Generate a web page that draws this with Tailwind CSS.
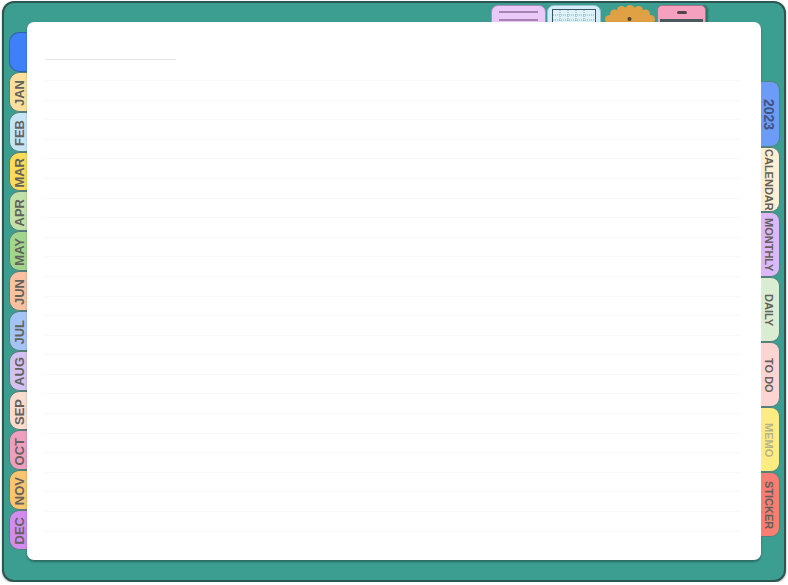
<!DOCTYPE html>
<html lang="en">
<head>
  <meta charset="UTF-8" />
  <title>Planner</title>
  <meta name="viewport" content="width=device-width, initial-scale=1.0" />
  <script src="https://cdn.jsdelivr.net/npm/@tailwindcss/browser@4"></script>
</head>
<body class="bg-white font-['Liberation_Sans',sans-serif] overflow-hidden">
  <!-- cover -->
  <div class="ml-[2px] mt-px w-[784px] h-[581px] rounded-[12px] border-2 border-[#2b5652] bg-[#3b9e90] flex pl-[5px] pt-[2px] shadow-[0_1px_2px_rgba(0,0,0,.35)]">

    <!-- month tabs -->
    <div class="w-[18px] mt-[27px] flex flex-col font-bold text-[13px] text-[#64625e] [&>div]:h-[39.85px] [&>div]:shrink-0 [&>div]:rounded-l-[10px] [&>div]:border [&>div]:border-r-0 [&>div]:border-[#55807a] [&>div]:flex [&>div]:items-center [&>div]:justify-center [&>div]:pl-[2px] [&>div]:pt-[2px] [&_span]:[writing-mode:vertical-rl] [&_span]:rotate-180">
      <div class="bg-[#3f80f8] !border-[#2f62a8]"></div>
      <div class="bg-[#fbdf9f]"><span>JAN</span></div>
      <div class="bg-[#c5e5f6]"><span>FEB</span></div>
      <div class="bg-[#fbdb58]"><span>MAR</span></div>
      <div class="bg-[#c2e1a8]"><span>APR</span></div>
      <div class="bg-[#a2d68e]"><span>MAY</span></div>
      <div class="bg-[#f8c1a2]"><span>JUN</span></div>
      <div class="bg-[#a5c4f6]"><span>JUL</span></div>
      <div class="bg-[#d3c1f1]"><span>AUG</span></div>
      <div class="bg-[#fadccf]"><span>SEP</span></div>
      <div class="bg-[#ee9fbe]"><span>OCT</span></div>
      <div class="bg-[#fbc46e]"><span>NOV</span></div>
      <div class="bg-[#d28cee]"><span>DEC</span></div>
    </div>

    <div class="w-[734px] flex flex-col">
      <!-- tools peeking out above the page -->
      <div class="h-[17px] flex overflow-hidden pl-[464px]">
        <div class="w-[55px] h-[24px] rounded-t-[7px] bg-[#eac8f8] border border-[#a98cb8] flex flex-col gap-[6px] pt-[5px] items-center">
          <div class="w-[39px] h-[2px] bg-[#a783b5]"></div>
          <div class="w-[39px] h-[2px] bg-[#a783b5]"></div>
        </div>
        <div class="ml-px w-[54px] h-[24px] rounded-t-[7px] bg-[#d4eef9] border border-[#9cc0cc] px-[4px] pt-[3px]">
          <svg width="44" height="20" viewBox="0 0 44 20" class="block">
            <rect x="0.5" y="0.5" width="43" height="19" fill="#dff2f9" stroke="#3d5560"/>
            <path d="M8 1V20M16 1V20M24 1V20M32 1V20M1 6H43M1 11H43" stroke="#7fa8b5" stroke-width="1" stroke-dasharray="1 1"/>
          </svg>
        </div>
        <div class="ml-[3px] w-[52px] h-[17px]">
          <svg width="52" height="17" viewBox="0 0 52 17" class="block">
            <g fill="#e0a044">
              <circle cx="26" cy="26" r="24"/>
              <circle cx="26" cy="4.5" r="4.5"/><circle cx="17.5" cy="5.5" r="4.5"/><circle cx="34.5" cy="5.5" r="4.5"/>
              <circle cx="10.5" cy="9" r="4.5"/><circle cx="41.5" cy="9" r="4.5"/><circle cx="5.5" cy="14.5" r="4.5"/>
              <circle cx="46.5" cy="14.5" r="4.5"/>
            </g>
            <circle cx="25.5" cy="14" r="2" fill="#4a4436"/>
          </svg>
        </div>
        <div class="ml-px w-[49px] h-[24px] rounded-t-[5px] bg-[#f6a0c0] border border-[#a37287] flex flex-col items-center pt-[5px] shadow-[2px_0_2px_rgba(0,0,0,.3)]">
          <div class="w-[10px] h-[3px] rounded-full bg-[#55434a]"></div>
          <div class="mt-[5px] w-[43px] h-[8px] bg-[#4b5a5e]"></div>
        </div>
      </div>

      <!-- page -->
      <div class="h-[539px] bg-white rounded-[7px] border-b border-[#2f6f66] pl-[18px] pr-[21px] pt-[37px] shadow-[0_1px_2px_rgba(0,0,0,.3)]">
        <div class="w-[131px] h-px bg-[#e8e8e8]"></div>
        <div id="lines" class="mt-[1.4px]"></div>
      </div>
    </div>

    <!-- section tabs -->
    <div class="w-[19px] mt-[76px] flex flex-col font-bold text-[#62605a] [&>div]:h-[65px] [&>div]:rounded-r-[9px] [&>div]:border [&>div]:border-l-0 [&>div]:border-[#55807a] [&>div]:flex [&>div]:items-center [&>div]:justify-center [&>div]:pr-[2px] [&>div]:pt-[1px] [&>div]:[writing-mode:vertical-rl]">
      <div class="bg-[#6c9bf8] text-[14px] !h-[66px] !text-[#3f5580] !pr-[4px]">2023</div>
      <div class="bg-[#fdf0d2] text-[11px]">CALENDAR</div>
      <div class="bg-[#dcb8f8] text-[11px]">MONTHLY</div>
      <div class="bg-[#d9edd2] text-[11px]">DAILY</div>
      <div class="bg-[#fcd4d1] text-[11px]">TO DO</div>
      <div class="bg-[#fdec82] text-[11px] !text-[#b5b48a]">MEMO</div>
      <div class="bg-[#f87d72] text-[11px]">STICKER</div>
    </div>
  </div>

  <script>
    // ruled lines
    const lines = document.getElementById("lines");
    for (let i = 0; i < 24; i++) {
      lines.innerHTML += `<div class="h-[19.6px] border-b border-[#f8f8f8]"></div>`;
    }
  </script>
</body>
</html>
